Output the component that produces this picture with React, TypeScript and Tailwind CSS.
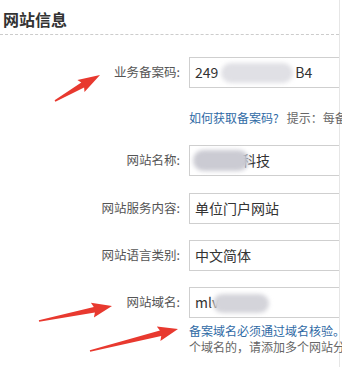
import React from "react";

type Pt = [number, number];

function arrowPoints(tail: Pt, tip: Pt, headLen: number, headW: number, shaftW: number): string {
  const dx = tip[0] - tail[0];
  const dy = tip[1] - tail[1];
  const len = Math.hypot(dx, dy);
  const ux = dx / len;
  const uy = dy / len;
  const nx = -uy;
  const ny = ux;
  const bx = tip[0] - ux * headLen;
  const by = tip[1] - uy * headLen;
  const p = (x: number, y: number) => `${x.toFixed(1)},${y.toFixed(1)}`;
  return [
    p(tail[0] + nx * 0.8, tail[1] + ny * 0.8),
    p(bx + nx * shaftW, by + ny * shaftW),
    p(bx - ux * 2 + nx * headW, by - uy * 2 + ny * headW),
    p(tip[0], tip[1]),
    p(bx - ux * 2 - nx * headW, by - uy * 2 - ny * headW),
    p(bx - nx * shaftW, by - ny * shaftW),
    p(tail[0] - nx * 0.8, tail[1] - ny * 0.8),
  ].join(" ");
}

const Label = ({ children }: { children: React.ReactNode }) => (
  <div className="w-[181px] shrink-0 pr-[1px] text-right text-[12.5px] text-[#555]">{children}</div>
);

const Box = ({ children }: { children?: React.ReactNode }) => (
  <div className="relative flex h-[31px] flex-1 items-center border border-r-0 border-[#cfcfcf] bg-white pl-[5px] text-[14px] text-[#333]">
    {children}
  </div>
);

export default function App() {
  return (
    <div
      className="relative h-[367px] w-[342px] overflow-hidden bg-white"
      style={{ fontFamily: '"Noto Sans CJK SC", "Noto Sans", sans-serif' }}
    >
      <div className="mr-[2px] h-full border-r border-[#e6e6e6]">
        <div className="pl-[3px] pt-[7px] text-[16px] font-semibold leading-[24px] text-[#333]">网站信息</div>
        <div className="mt-[3px] border-t border-dashed border-[#cccccc]" />

        <div className="mt-[22px] flex items-center gap-[8px]">
          <Label>业务备案码:</Label>
          <Box>
            <span>249</span>
            <span className="ml-[3px] h-[20px] w-[72px] rounded-full bg-[#e0e0e5] blur-[2px]" />
            <span className="ml-[2px]">B4</span>
          </Box>
        </div>

        <div className="mt-[22px] flex pl-[189px] text-[12px] leading-[16px] whitespace-nowrap">
          <span className="text-[#2f6aa5]">如何获取备案码?</span>
          <span className="ml-[8px] text-[#666]">提示：每备</span>
        </div>

        <div className="mt-[19px] flex items-center gap-[8px]">
          <Label>网站名称:</Label>
          <Box>
            <span className="ml-[47px]">科技</span>
            <span className="absolute left-[3px] top-[4px] h-[21px] w-[56px] rounded-full bg-[#cbcbd3] blur-[2px]" />
          </Box>
        </div>

        <div className="mt-[17px] flex items-center gap-[8px]">
          <Label>网站服务内容:</Label>
          <Box>单位门户网站</Box>
        </div>

        <div className="mt-[16px] flex items-center gap-[8px]">
          <Label>网站语言类别:</Label>
          <Box>中文简体</Box>
        </div>

        <div className="mt-[16px] flex items-center gap-[8px]">
          <Label>网站域名:</Label>
          <Box>
            <span>mlv</span>
            <span className="absolute left-[23px] top-[6px] h-[19px] w-[56px] rounded-full bg-[#d4d4da] blur-[2px]" />
          </Box>
        </div>

        <div className="mt-[5px] pl-[189px] text-[12px] leading-[16px] whitespace-nowrap">
          <div className="text-[#2f6aa5]">备案域名必须通过域名核验。</div>
          <div className="text-[#666]">个域名的，请添加多个网站分</div>
        </div>
      </div>

      <svg className="pointer-events-none absolute inset-0" width="342" height="367">
        <polygon points={arrowPoints([55, 101], [100, 75], 20, 7, 2.8)} fill="#e8392f" />
        <polygon points={arrowPoints([39, 321], [112, 306], 18, 7.5, 2.8)} fill="#e8392f" />
        <polygon points={arrowPoints([90, 351], [178, 329], 18, 7.5, 2.8)} fill="#e8392f" />
      </svg>
    </div>
  );
}
